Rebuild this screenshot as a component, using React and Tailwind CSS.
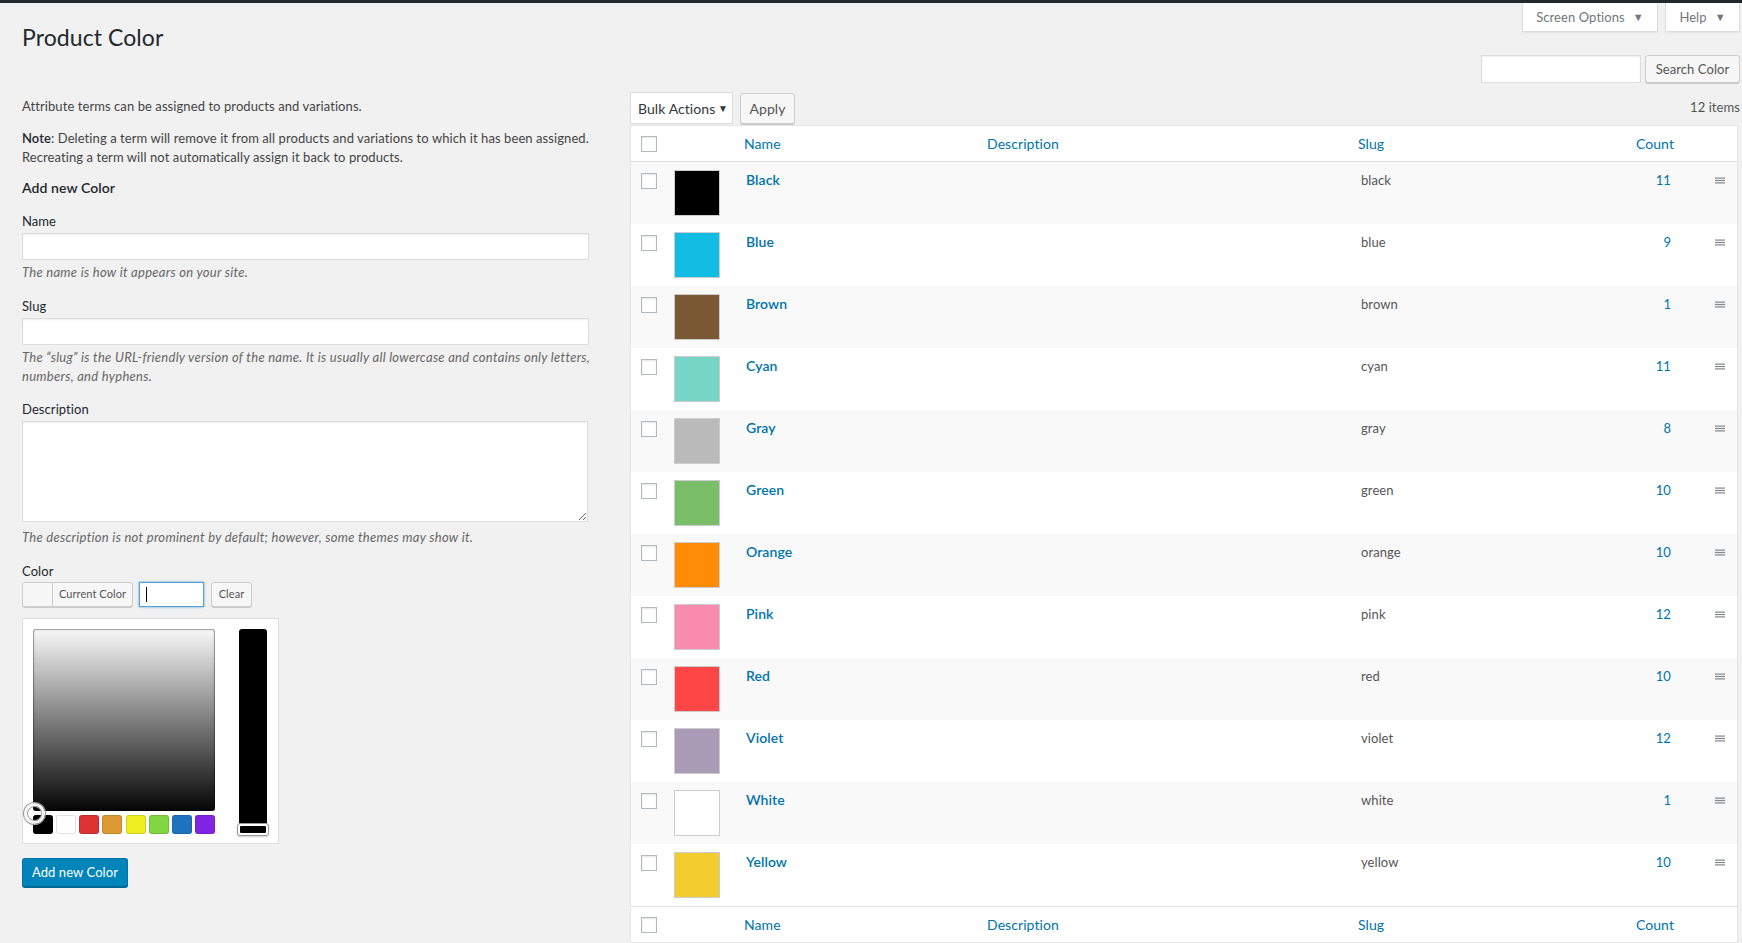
import React from "react";

const rows = [
  ["Black", "#000000", "black", "11"],
  ["Blue", "#12bde3", "blue", "9"],
  ["Brown", "#7b5834", "brown", "1"],
  ["Cyan", "#76d6c6", "cyan", "11"],
  ["Gray", "#bababa", "gray", "8"],
  ["Green", "#7bbe6a", "green", "10"],
  ["Orange", "#ff8c06", "orange", "10"],
  ["Pink", "#f88bae", "pink", "12"],
  ["Red", "#ff4646", "red", "10"],
  ["Violet", "#aa9bb6", "violet", "12"],
  ["White", "#ffffff", "white", "1"],
  ["Yellow", "#f3cd2f", "yellow", "10"],
];

const palette = ["#000000", "#ffffff", "#dd3333", "#dd9933", "#eeee22", "#81d742", "#1e73be", "#8224e3"];

const COLS = "grid grid-cols-[33px_71px_243px_371px_245px_90px_1fr]";

function Checkbox() {
  return (
    <div className="w-4 h-4 bg-white border border-[#b4b9be] shadow-[inset_0_1px_2px_rgba(0,0,0,0.1)]" />
  );
}

function Handle() {
  return (
    <svg width="10" height="7" viewBox="0 0 10 7" className="block">
      <rect x="0" y="0.5" width="10" height="1.2" fill="#82878c" />
      <rect x="0" y="2.9" width="10" height="1.2" fill="#82878c" />
      <rect x="0" y="5.3" width="10" height="1.2" fill="#82878c" />
    </svg>
  );
}

function HeaderRow({ top }) {
  return (
    <div className={`${COLS} h-[36px] items-center bg-white ${top ? "border-b" : "border-t"} border-[#e1e1e1] text-[14px] text-[#0073aa]`}>
      <div className="pl-[10px] pt-[1px]"><Checkbox /></div>
      <div />
      <div className="pl-[9px]">Name</div>
      <div className="pl-[9px]">Description</div>
      <div className="pl-[9px]">Slug</div>
      <div className="pr-[10px] text-right">Count</div>
      <div />
    </div>
  );
}

export default function App() {
  return (
    <div className="w-[1742px] h-[943px] overflow-hidden bg-[#f1f1f1] font-['Lato',sans-serif] text-[13px] tracking-[0.08px] text-[#444]">
      <div className="h-[3px] bg-[#23282d]" />
      <div className="pl-[22px] pr-[2px]">
        {/* header */}
        <div className="flex justify-between items-start h-[52px]">
          <h1 className="pt-[20px] text-[23px] leading-[29px] font-normal text-[#23282d]">Product Color</h1>
          <div className="flex gap-[7px]">
            <div className="w-[136px] h-[29px] pt-[1px] bg-white border border-t-0 border-[#ddd] flex items-center justify-center gap-[8px] text-[13px] text-[#72777c] shadow-[0_1px_1px_rgba(0,0,0,0.04)]">
              <span>Screen Options</span>
              <span className="text-[11px]">▼</span>
            </div>
            <div className="w-[75px] h-[29px] pt-[1px] bg-white border border-t-0 border-[#ddd] flex items-center justify-center gap-[8px] text-[13px] text-[#72777c] shadow-[0_1px_1px_rgba(0,0,0,0.04)]">
              <span>Help</span>
              <span className="text-[11px]">▼</span>
            </div>
          </div>
        </div>

        {/* search */}
        <div className="flex justify-end gap-[4px] h-[28px]">
          <div className="w-[160px] h-[28px] bg-white border border-[#ddd] shadow-[inset_0_1px_2px_rgba(0,0,0,0.07)]" />
          <div className="w-[95px] h-[28px] pt-[1px] bg-[#f7f7f7] border border-[#ccc] rounded-[3px] shadow-[0_1px_0_#ccc] flex items-center justify-center text-[13px] text-[#555]">
            Search Color
          </div>
        </div>

        {/* columns */}
        <div className="flex gap-[41px]">
          {/* left */}
          <div className="w-[567px] shrink-0">
            <p className="mt-[14px] leading-[19px] whitespace-nowrap">Attribute terms can be assigned to products and variations.</p>
            <p className="mt-[13px] leading-[19px] whitespace-nowrap">
              <strong className="font-semibold text-[#23282d]">Note</strong>: Deleting a term will remove it from all products and variations to which it has been assigned.
              <br />
              Recreating a term will not automatically assign it back to products.
            </p>
            <h2 className="mt-[11px] text-[14px] leading-[20px] font-semibold text-[#23282d]">Add new Color</h2>

            <div className="mt-[14px] leading-[19px] text-[#23282d]">Name</div>
            <input readOnly className="block mt-[2px] w-[567px] h-[27px] bg-white border border-[#ddd] shadow-[inset_0_1px_2px_rgba(0,0,0,0.07)] outline-none" />
            <p className="mt-[3px] leading-[19px] italic tracking-[0.28px] text-[#666]">The name is how it appears on your site.</p>

            <div className="mt-[15px] leading-[19px] text-[#23282d]">Slug</div>
            <input readOnly className="block mt-[2px] w-[567px] h-[27px] bg-white border border-[#ddd] shadow-[inset_0_1px_2px_rgba(0,0,0,0.07)] outline-none" />
            <p className="mt-[3px] leading-[19px] italic tracking-[0.28px] text-[#666] whitespace-nowrap">
              The “slug” is the URL-friendly version of the name. It is usually all lowercase and contains only letters,
              <br />
              numbers, and hyphens.
            </p>

            <div className="mt-[14px] leading-[19px] text-[#23282d]">Description</div>
            <textarea readOnly className="block mt-[2px] w-[566px] h-[101px] bg-white border border-[#ddd] shadow-[inset_0_1px_2px_rgba(0,0,0,0.07)] outline-none" />
            <p className="mt-[6px] leading-[19px] italic tracking-[0.28px] text-[#666]">The description is not prominent by default; however, some themes may show it.</p>

            <div className="mt-[15px] leading-[19px] text-[#23282d]">Color</div>
            <div className="flex items-center gap-[6px] mt-[1px]">
              <div className="flex h-[25px] w-[111px] rounded-[3px] border border-[#ccc] bg-[#f7f7f7] shadow-[0_1px_0_#ccc] overflow-hidden">
                <div className="w-[30px] h-full bg-[#f7f7f7] border-r border-[#ccc]" />
                <div className="flex-1 flex items-center justify-center text-[11px] text-[#555]">Current Color</div>
              </div>
              <div className="w-[65px] h-[25px] bg-white border border-[#5b9dd9] shadow-[0_0_2px_rgba(30,140,190,0.8)] flex items-center pl-[6px]">
                <span className="w-px h-[15px] bg-black" />
              </div>
              <div className="ml-[1px] w-[41px] h-[25px] rounded-[3px] border border-[#ccc] bg-[#f7f7f7] shadow-[0_1px_0_#ccc] flex items-center justify-center text-[11px] text-[#555]">
                Clear
              </div>
            </div>

            {/* picker */}
            <div className="relative mt-[11px] w-[257px] h-[226px] bg-white border border-[#dfdfdf]">
              <div className="flex pl-[10px] pt-[10px] gap-[24px]">
                <div className="flex flex-col">
                  <div className="w-[182px] h-[182px] rounded-[3px] bg-[linear-gradient(to_bottom,#f8f8f8,#050505)] shadow-[inset_0_0_0_1px_rgba(0,0,0,0.25),inset_0_0_3px_rgba(0,0,0,0.3)]" />
                  <div className="flex justify-between w-[182px] mt-[4px]">
                    {palette.map((c) => (
                      <div
                        key={c}
                        className="w-[20px] h-[19px] rounded-[3px] shadow-[inset_0_0_0_1px_rgba(0,0,0,0.12)]"
                        style={{ backgroundColor: c }}
                      />
                    ))}
                  </div>
                </div>
                <div className="relative w-[28px] h-[206px] bg-black rounded-[3px]">
                  <div className="absolute left-[-2px] bottom-[-1px] w-[32px] h-[13px] rounded-[3px] border border-[#999] bg-white p-[2px] shadow-[0_1px_2px_rgba(0,0,0,0.2)]">
                    <div className="w-full h-full bg-black rounded-[1px]" />
                  </div>
                </div>
              </div>
              <div className="absolute left-[1px] top-[184px] w-[21px] h-[21px] rounded-full border-[3px] border-[#f4f4f4] shadow-[0_0_0_1px_#999,inset_0_0_0_1px_#999]" />
            </div>

            <div className="mt-[14px] w-[106px] h-[29px] rounded-[3px] bg-[#0085ba] border border-[#0073aa] border-b-[#006799] shadow-[0_1px_0_#006799] flex items-center justify-center text-[13px] text-white">
              Add new Color
            </div>
          </div>

          {/* right */}
          <div className="flex-1 min-w-0">
            <div className="mt-[9px] h-[32px] flex items-center">
              <div className="w-[103px] h-[32px] bg-white border border-[#ddd] flex items-center justify-between pl-[7px] pr-[4px] text-[14px] text-[#32373c]">
                <span>Bulk Actions</span>
                <span className="text-[10px] text-[#32373c]">▼</span>
              </div>
              <div className="ml-[7px] w-[55px] h-[31px] bg-[#f7f7f7] border border-[#ccc] rounded-[3px] shadow-[0_1px_0_#ccc] flex items-center justify-center text-[14px] text-[#555]">
                Apply
              </div>
              <div className="ml-auto text-[13px] text-[#555]">12 items</div>
            </div>

            <div className="mt-[1px] w-[1108px] bg-white border border-[#e5e5e5] shadow-[0_1px_1px_rgba(0,0,0,0.04)]">
              <HeaderRow top />
              {rows.map(([name, color, slug, count], i) => (
                <div key={name} className={`${COLS} h-[62px] items-start ${i % 2 === 0 ? "bg-[#f9f9f9]" : "bg-white"}`}>
                  <div className="pl-[10px] pt-[11px]"><Checkbox /></div>
                  <div className="pl-[10px] pt-[8px]">
                    <div className="w-[46px] h-[46px] border border-[#ccc]" style={{ backgroundColor: color }} />
                  </div>
                  <div className="pl-[11px] pt-[8px] leading-[20px] text-[14px] font-semibold text-[#0073aa]">{name}</div>
                  <div />
                  <div className="pl-[12px] pt-[8px] leading-[20px] text-[13px] text-[#555]">{slug}</div>
                  <div className="pr-[13px] pt-[8px] leading-[20px] text-right text-[13px] text-[#0073aa]">{count}</div>
                  <div className="pl-[31px] pt-[15px]"><Handle /></div>
                </div>
              ))}
              <HeaderRow />
            </div>
          </div>
        </div>
      </div>
    </div>
  );
}
